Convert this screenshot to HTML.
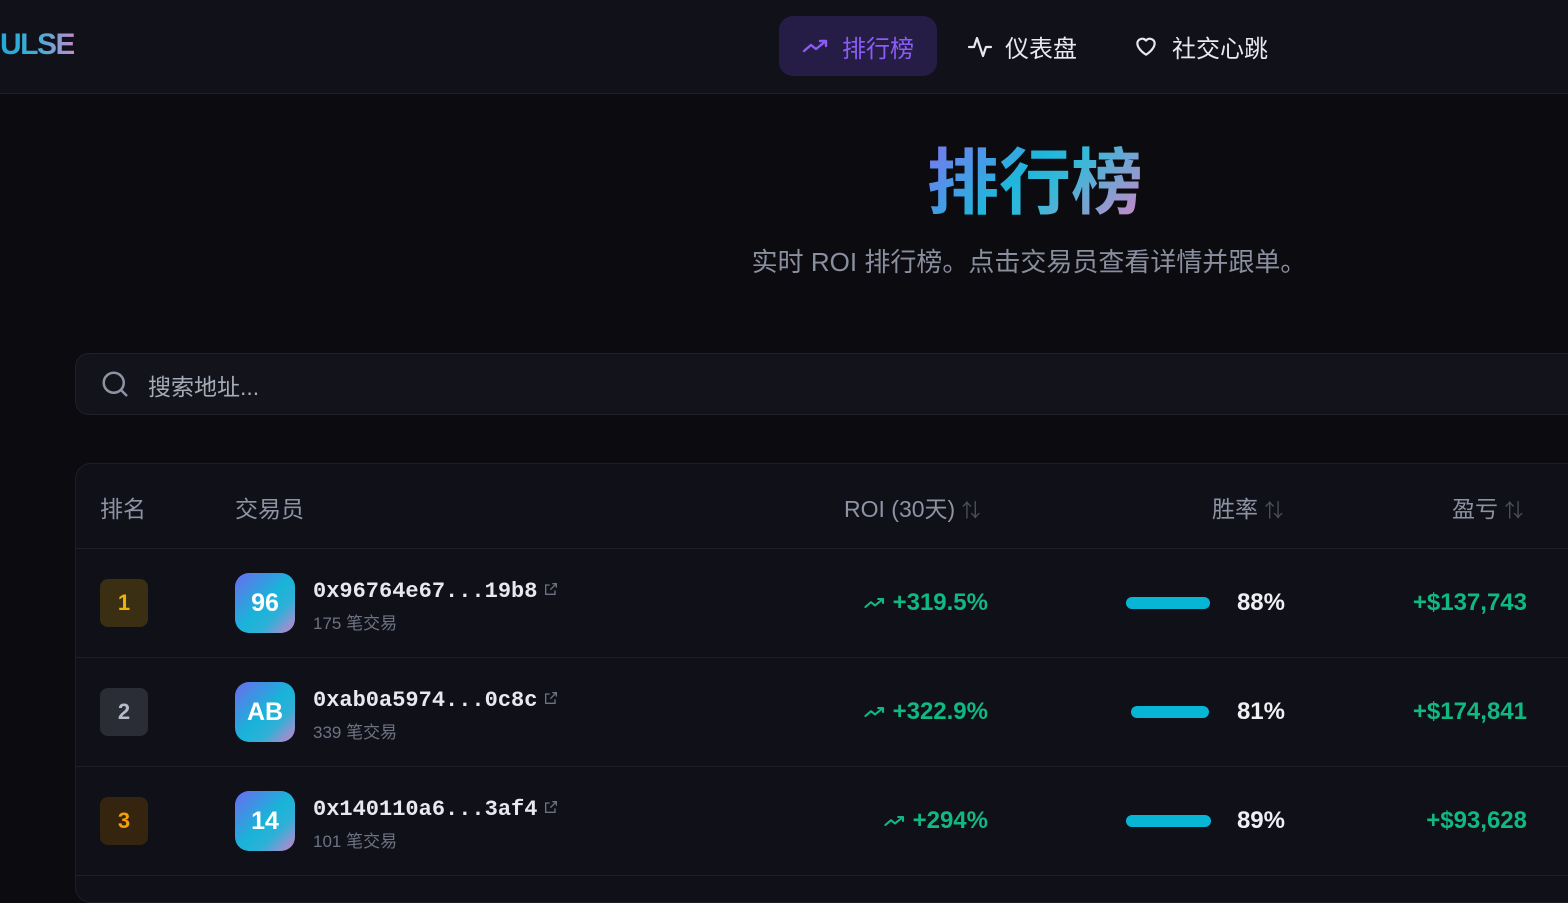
<!DOCTYPE html>
<html><head><meta charset="utf-8"><style>
*{margin:0;padding:0;box-sizing:border-box}
body{width:1568px;height:881px;overflow:hidden;background:#0b0b10;font-family:"Liberation Sans","Noto Sans CJK SC",sans-serif;position:relative;color:#e5e7eb}
.a{position:absolute}
.nav{left:0;top:0;width:1568px;height:94px;background:#101119;border-bottom:1px solid #1e1f28}
.logo{left:0;top:28px;font-size:30px;font-weight:bold;background:linear-gradient(90deg,#22a8d8,#3fb0d6 50%,#c58ad0);-webkit-background-clip:text;color:transparent;letter-spacing:-1.5px}
.tab{top:16px;height:60px;display:flex;align-items:center;font-size:24px;color:#e8e9ee;gap:12px}
.act{left:779px;width:158px;background:#261d46;border-radius:14px;color:#8b5cf6;justify-content:center}
.title{left:0;width:2070px;text-align:center;top:124px;font-size:72px;font-weight:bold;font-family:"Noto Sans CJK SC",sans-serif}
.title span{background:linear-gradient(135deg,#8b6cf5,#1fb6dc 45%,#38b8d8 60%,#e07fc6);-webkit-background-clip:text;color:transparent}
.sub{left:0;width:2058px;text-align:center;top:242px;font-size:26px;color:#8a8f9f}
.search{left:75px;top:353px;width:1510px;height:62px;background:#12131b;border:1px solid #20222b;border-radius:14px}
.card{left:75px;top:463px;width:1510px;height:440px;background:#101118;border:1px solid #1d1f28;border-radius:16px}
.th{top:490px;font-size:23px;color:#8d93a3}
.line{left:76px;width:1500px;height:1px;background:#1d1f28}
.badge{width:48px;height:48px;border-radius:8px;display:flex;align-items:center;justify-content:center;font-size:22px;font-weight:bold}
.av{width:60px;height:60px;border-radius:14px;background:linear-gradient(135deg,#6a6cf0,#18b4d8 50%,#2fb0d8 70%,#d080c8);display:flex;align-items:center;justify-content:center;font-size:25px;font-weight:bold;color:#fff}
.addr{font-family:"Liberation Mono",monospace;font-size:22px;font-weight:bold;color:#e8e9ee}
.tx{font-size:17px;color:#6d7282}
.roi{font-size:24px;font-weight:bold;color:#10b981;text-align:right;width:200px;display:flex;justify-content:flex-end;align-items:center;gap:6px}
.bar{height:12px;border-radius:6px;background:#06b6d4}
.pct{font-size:24px;font-weight:bold;color:#eef0f3;text-align:right;width:80px}
.pnl{font-size:24px;font-weight:bold;color:#10b981;text-align:right;width:200px}
.ext{display:inline-block;vertical-align:middle;margin-left:6px;margin-top:-4px}
</style></head><body>
<div class="a nav"></div>
<div class="a logo">ULSE</div>
<div class="a tab act"><svg width="28" height="20" viewBox="0 0 28 20" fill="none" stroke="#8b5cf6" stroke-width="2.4" stroke-linecap="round" stroke-linejoin="round"><path d="M2 15l7-6 5 4 10-8M18 5h6v5"/></svg>排行榜</div>
<div class="a tab" style="left:967px"><svg width="26" height="28" viewBox="0 0 26 28" fill="none" stroke="#e8e9ee" stroke-width="2.2" stroke-linecap="round" stroke-linejoin="round"><path d="M2 15h5l3-9 6 18 3-9h5"/></svg>仪表盘</div>
<div class="a tab" style="left:1132px"><svg width="28" height="26" viewBox="0 0 24 24" fill="none" stroke="#e8e9ee" stroke-width="2" stroke-linejoin="round"><path d="M12 20s-8-4.8-8-10.5A4.5 4.5 0 0 1 12 7a4.5 4.5 0 0 1 8 2.5C20 15.2 12 20 12 20z"/></svg>社交心跳</div>

<div class="a title"><span>排行榜</span></div>
<div class="a sub">实时 ROI 排行榜。点击交易员查看详情并跟单。</div>

<div class="a search"></div>
<svg class="a" style="left:100px;top:369px" width="30" height="30" viewBox="0 0 24 24" fill="none" stroke="#8d93a3" stroke-width="2" stroke-linecap="round"><circle cx="11" cy="11" r="8"/><path d="M21 21l-4.3-4.3"/></svg>
<div class="a" style="left:148px;top:368px;font-size:23px;color:#a6abb8">搜索地址...</div>

<div class="a card"></div>
<div class="a th" style="left:100px">排名</div>
<div class="a th" style="left:235px">交易员</div>
<div class="a th" style="left:844px">ROI (30天) <span style="color:#4b5060;font-size:19px">⇅</span></div>
<div class="a th" style="left:1212px">胜率 <span style="color:#4b5060;font-size:19px">⇅</span></div>
<div class="a th" style="left:1452px">盈亏 <span style="color:#4b5060;font-size:19px">⇅</span></div>
<div class="a line" style="top:548px"></div>
<div class="a line" style="top:657px"></div>
<div class="a line" style="top:766px"></div>
<div class="a line" style="top:875px"></div>

<!-- row 1 -->
<div class="a badge" style="left:100px;top:579px;background:#3a2f13;color:#eab308">1</div>
<div class="a av" style="left:235px;top:573px">96</div>
<div class="a addr" style="left:313px;top:579px">0x96764e67...19b8<svg class="ext" width="16" height="16" viewBox="0 0 24 24" fill="none" stroke="#6d7282" stroke-width="2"><path d="M14 4h6v6M20 4l-9 9M18 14v6H4V6h6"/></svg></div>
<div class="a tx" style="left:313px;top:609px">175 笔交易</div>
<div class="a roi" style="left:788px;top:589px"><svg width="24" height="16" viewBox="0 0 28 20" fill="none" stroke="#10b981" stroke-width="2.6" stroke-linecap="round" stroke-linejoin="round"><path d="M2 15l7-6 5 4 10-8M18 5h6v5"/></svg>+319.5%</div>
<div class="a bar" style="left:1126px;top:597px;width:84px"></div>
<div class="a pct" style="left:1205px;top:589px">88%</div>
<div class="a pnl" style="left:1327px;top:589px">+$137,743</div>

<!-- row 2 -->
<div class="a badge" style="left:100px;top:688px;background:#2a2d36;color:#b8bcc8">2</div>
<div class="a av" style="left:235px;top:682px">AB</div>
<div class="a addr" style="left:313px;top:688px">0xab0a5974...0c8c<svg class="ext" width="16" height="16" viewBox="0 0 24 24" fill="none" stroke="#6d7282" stroke-width="2"><path d="M14 4h6v6M20 4l-9 9M18 14v6H4V6h6"/></svg></div>
<div class="a tx" style="left:313px;top:718px">339 笔交易</div>
<div class="a roi" style="left:788px;top:698px"><svg width="24" height="16" viewBox="0 0 28 20" fill="none" stroke="#10b981" stroke-width="2.6" stroke-linecap="round" stroke-linejoin="round"><path d="M2 15l7-6 5 4 10-8M18 5h6v5"/></svg>+322.9%</div>
<div class="a bar" style="left:1131px;top:706px;width:78px"></div>
<div class="a pct" style="left:1205px;top:698px">81%</div>
<div class="a pnl" style="left:1327px;top:698px">+$174,841</div>

<!-- row 3 -->
<div class="a badge" style="left:100px;top:797px;background:#35250f;color:#f59e0b">3</div>
<div class="a av" style="left:235px;top:791px">14</div>
<div class="a addr" style="left:313px;top:797px">0x140110a6...3af4<svg class="ext" width="16" height="16" viewBox="0 0 24 24" fill="none" stroke="#6d7282" stroke-width="2"><path d="M14 4h6v6M20 4l-9 9M18 14v6H4V6h6"/></svg></div>
<div class="a tx" style="left:313px;top:827px">101 笔交易</div>
<div class="a roi" style="left:788px;top:807px"><svg width="24" height="16" viewBox="0 0 28 20" fill="none" stroke="#10b981" stroke-width="2.6" stroke-linecap="round" stroke-linejoin="round"><path d="M2 15l7-6 5 4 10-8M18 5h6v5"/></svg>+294%</div>
<div class="a bar" style="left:1126px;top:815px;width:85px"></div>
<div class="a pct" style="left:1205px;top:807px">89%</div>
<div class="a pnl" style="left:1327px;top:807px">+$93,628</div>
</body></html>
